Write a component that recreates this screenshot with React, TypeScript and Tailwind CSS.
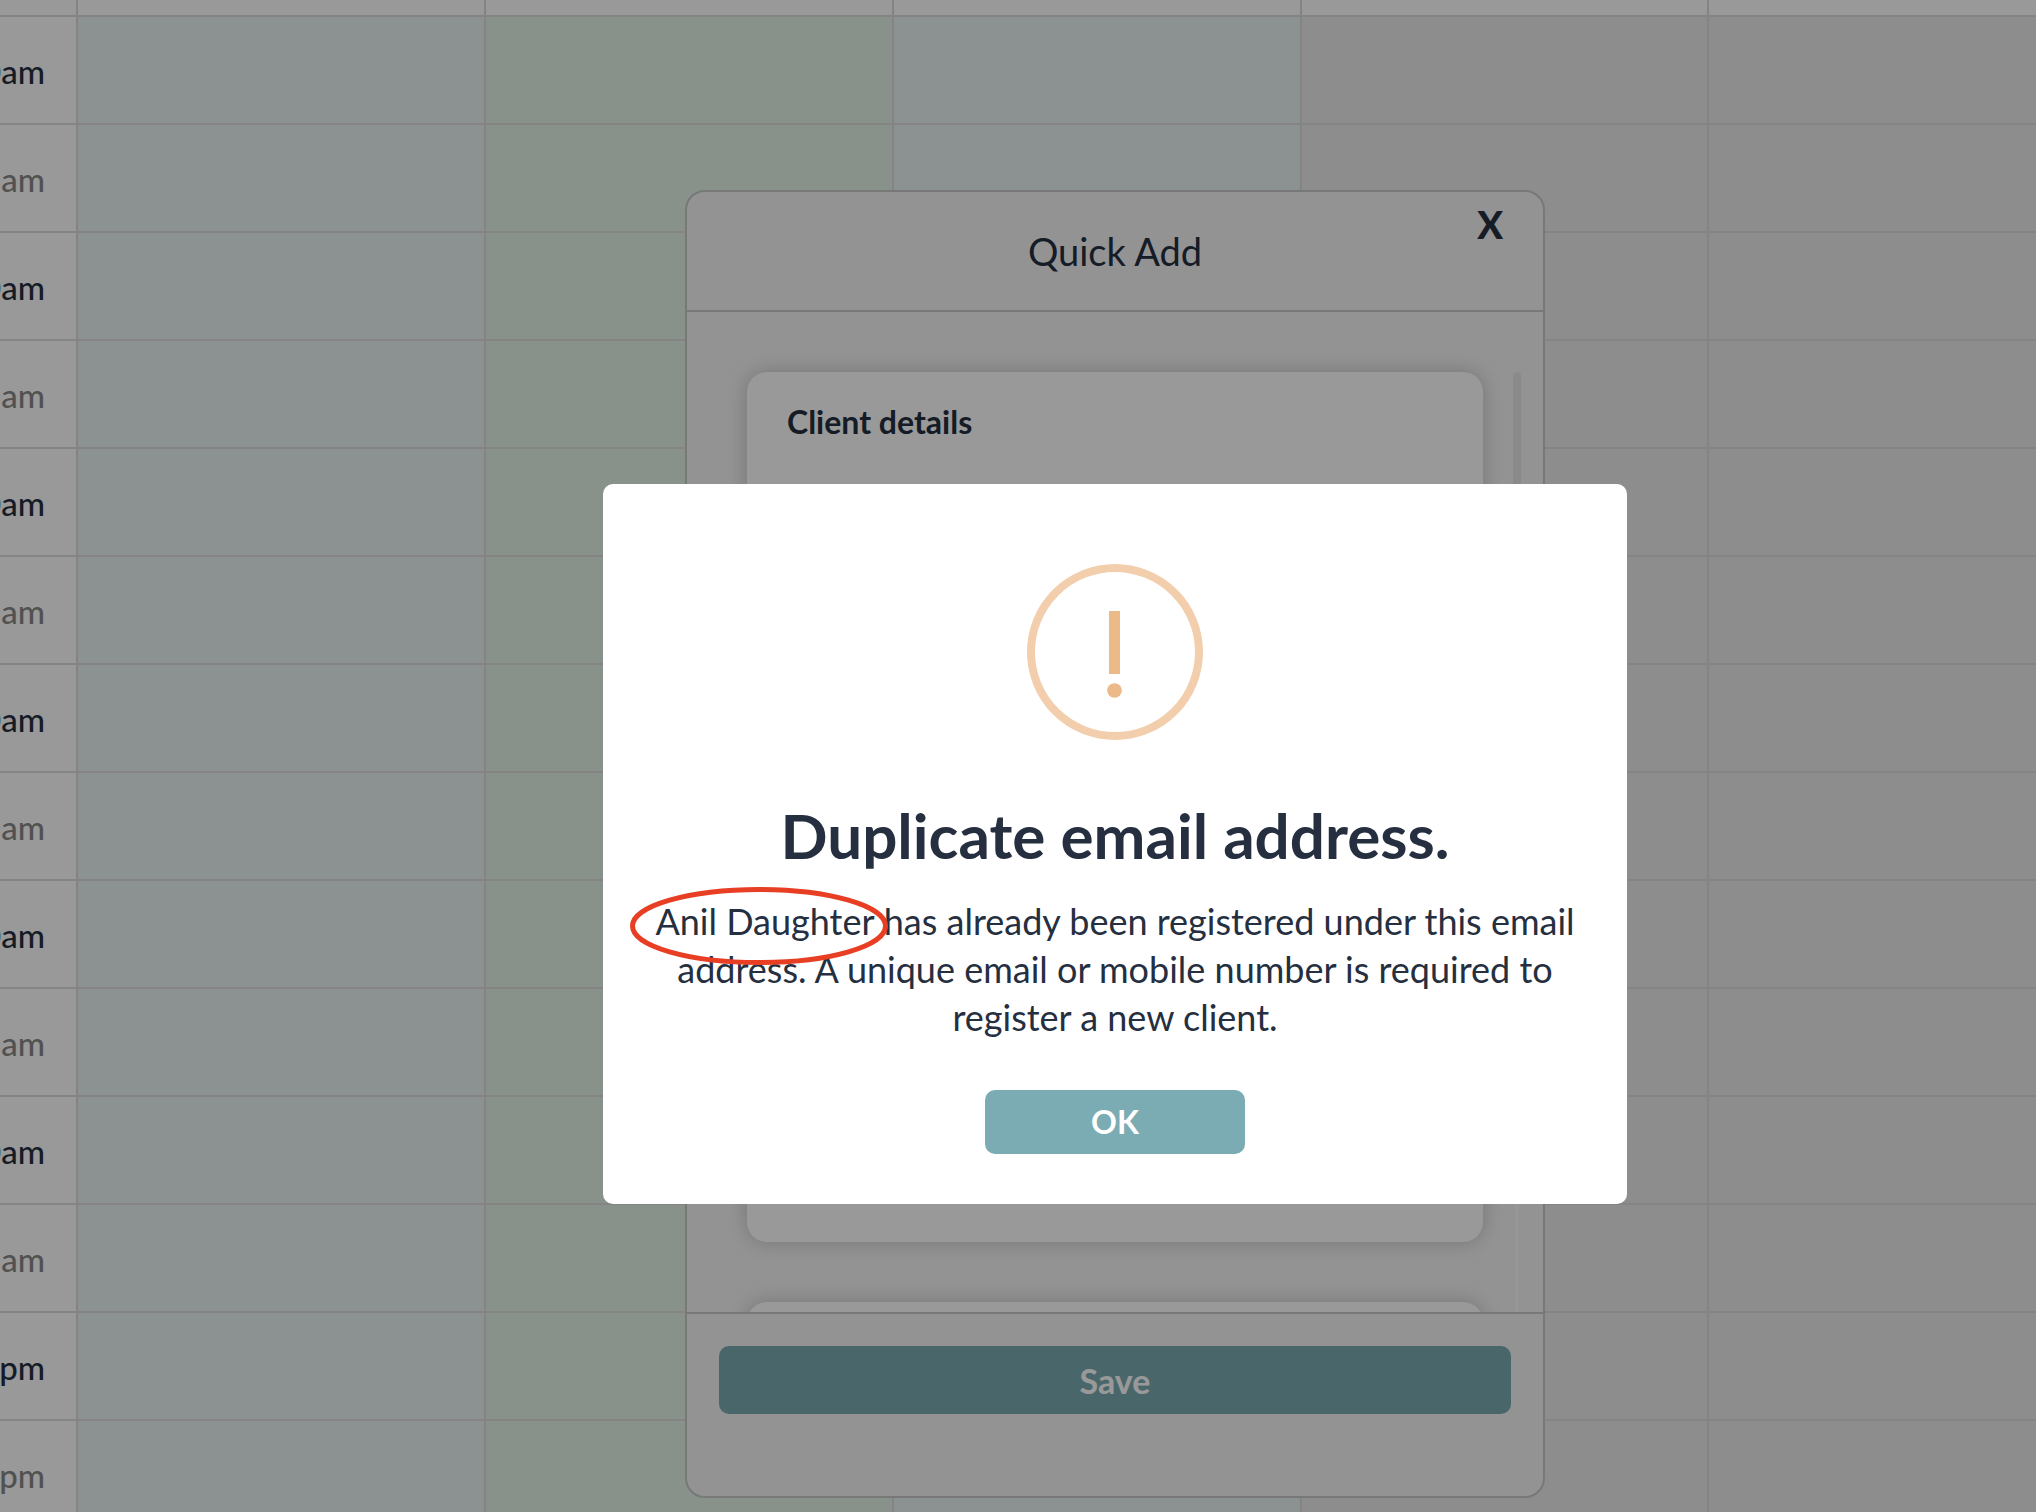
import clsx from 'clsx'

const times = [
  '9:00am',
  '9:15am',
  '9:30am',
  '9:45am',
  '10:00am',
  '10:15am',
  '10:30am',
  '10:45am',
  '11:00am',
  '11:15am',
  '11:30am',
  '11:45am',
  '12:00pm',
  '12:15pm',
]

const dayColors = [
  'bg-[#e8f3f2]',
  'bg-[#e4f2e8]',
  'bg-[#e8f3f2]',
  'bg-[#ebebeb]',
  'bg-[#ebebeb]',
]

function Calendar() {
  return (
    <table className="w-full table-fixed border-separate border-spacing-0">
      <colgroup>
        <col className="w-[78px]" />
        <col className="w-[408px]" />
        <col className="w-[408px]" />
        <col className="w-[408px]" />
        <col className="w-[407px]" />
        <col />
      </colgroup>
      <thead>
        <tr className="h-[17px]">
          <td className="border-r-2 border-b-2 border-[#dcdcdc] p-0" />
          {dayColors.map((_, i) => (
            <td
              key={i}
              className="border-r-2 border-b-2 border-[#dcdcdc] p-0 last:border-r-0"
            />
          ))}
        </tr>
      </thead>
      <tbody>
        {times.map((time, i) => (
          <tr key={time} className="h-[108px]">
            <th
              scope="row"
              className={clsx(
                'border-r-2 border-b-2 border-[#dcdcdc] p-0 pt-[3px] pr-[31px] text-[33px] font-medium',
                i % 2 === 0 ? 'text-[#252f3f]' : 'text-[#888888]'
              )}
            >
              <div className="flex justify-end">{time}</div>
            </th>
            {dayColors.map((color, day) => (
              <td
                key={day}
                className={clsx(
                  'border-r-2 border-b-2 border-[#dcdcdc] p-0 last:border-r-0',
                  color
                )}
              />
            ))}
          </tr>
        ))}
      </tbody>
    </table>
  )
}

function QuickAdd() {
  return (
    <section className="w-[860px] overflow-hidden rounded-[20px] border-2 border-[#c8c8c8] bg-[#f5f5f5]">
      <header className="grid h-[120px] grid-cols-[1fr_auto_1fr] items-center border-b-2 border-[#c8c8c8]">
        <h2 className="col-start-2 text-[38px] leading-[48px]">Quick Add</h2>
        <button
          aria-label="Close"
          className="mt-3 mr-10 self-start justify-self-end text-[38px] leading-[40px] font-black"
        >
          X
        </button>
      </header>

      <div className="flex h-[1000px] overflow-hidden pt-[60px] pl-[60px]">
        <div className="flex flex-1 flex-col gap-[60px]">
          <div className="h-[870px] shrink-0 rounded-[20px] bg-white px-10 pt-7 shadow-[0_0_20px_rgba(0,0,0,0.2)]">
            <h3 className="text-[32px] leading-[44px] font-bold">
              Client details
            </h3>
          </div>
          <div className="h-[200px] shrink-0 rounded-[20px] bg-white shadow-[0_0_20px_rgba(0,0,0,0.2)]" />
        </div>
        <div className="mr-[22px] ml-[30px] flex w-2 flex-col items-center">
          <div className="h-[500px] w-2 shrink-0 rounded-full bg-[#e6e6e6]" />
          <div className="w-1 flex-1 bg-[#fbfbfb]" />
        </div>
      </div>

      <footer className="border-t-2 border-[#c8c8c8] px-8 pt-8 pb-[82px]">
        <button className="h-[68px] w-full rounded-[10px] bg-[#7bacb3] text-[34px] font-bold text-white">
          Save
        </button>
      </footer>
    </section>
  )
}

function WarningIcon() {
  return (
    <svg className="size-[176px]" viewBox="0 0 176 176" fill="none">
      <circle cx="88" cy="88" r="84" stroke="#f2cead" strokeWidth="8" />
      <rect x="82" y="47" width="11" height="63" fill="#ecb989" />
      <circle cx="87.5" cy="126.5" r="7.3" fill="#ecb989" />
    </svg>
  )
}

function DuplicateAlert() {
  return (
    <div
      role="alertdialog"
      aria-labelledby="alert-title"
      className="flex w-[1024px] flex-col items-center rounded-[10px] bg-white px-10 pt-20 pb-[50px]"
    >
      <WarningIcon />
      <h1
        id="alert-title"
        className="mt-[60px] text-[62px] leading-[71px] font-bold"
      >
        Duplicate email address.
      </h1>
      <p className="mt-[26px] text-center text-[36px] leading-[48px]">
        <span className="relative">
          Anil Daughter
          <svg
            className="absolute -top-[12px] -left-[25px] h-[78px] w-[258px]"
            viewBox="0 0 258 78"
            fill="none"
          >
            <ellipse
              cx="129"
              cy="39"
              rx="126.5"
              ry="36.5"
              stroke="#e83e24"
              strokeWidth="5"
            />
          </svg>
        </span>{' '}
        has already been registered under this email address. A unique email or
        mobile number is required to register a new client.
      </p>
      <button className="mt-[49px] h-16 w-[260px] rounded-[10px] bg-[#7bacb3] text-[32px] font-bold text-white">
        OK
      </button>
    </div>
  )
}

export default function App() {
  return (
    <div className="relative h-screen overflow-hidden bg-white font-[Lato,sans-serif] text-[#252f3f]">
      <Calendar />
      <div className="absolute inset-0 flex items-center justify-center pt-[176px] pl-[194px]">
        <QuickAdd />
      </div>
      <div className="absolute inset-0 flex items-center justify-center bg-black/40 pt-[176px] pl-[194px]">
        <DuplicateAlert />
      </div>
    </div>
  )
}
